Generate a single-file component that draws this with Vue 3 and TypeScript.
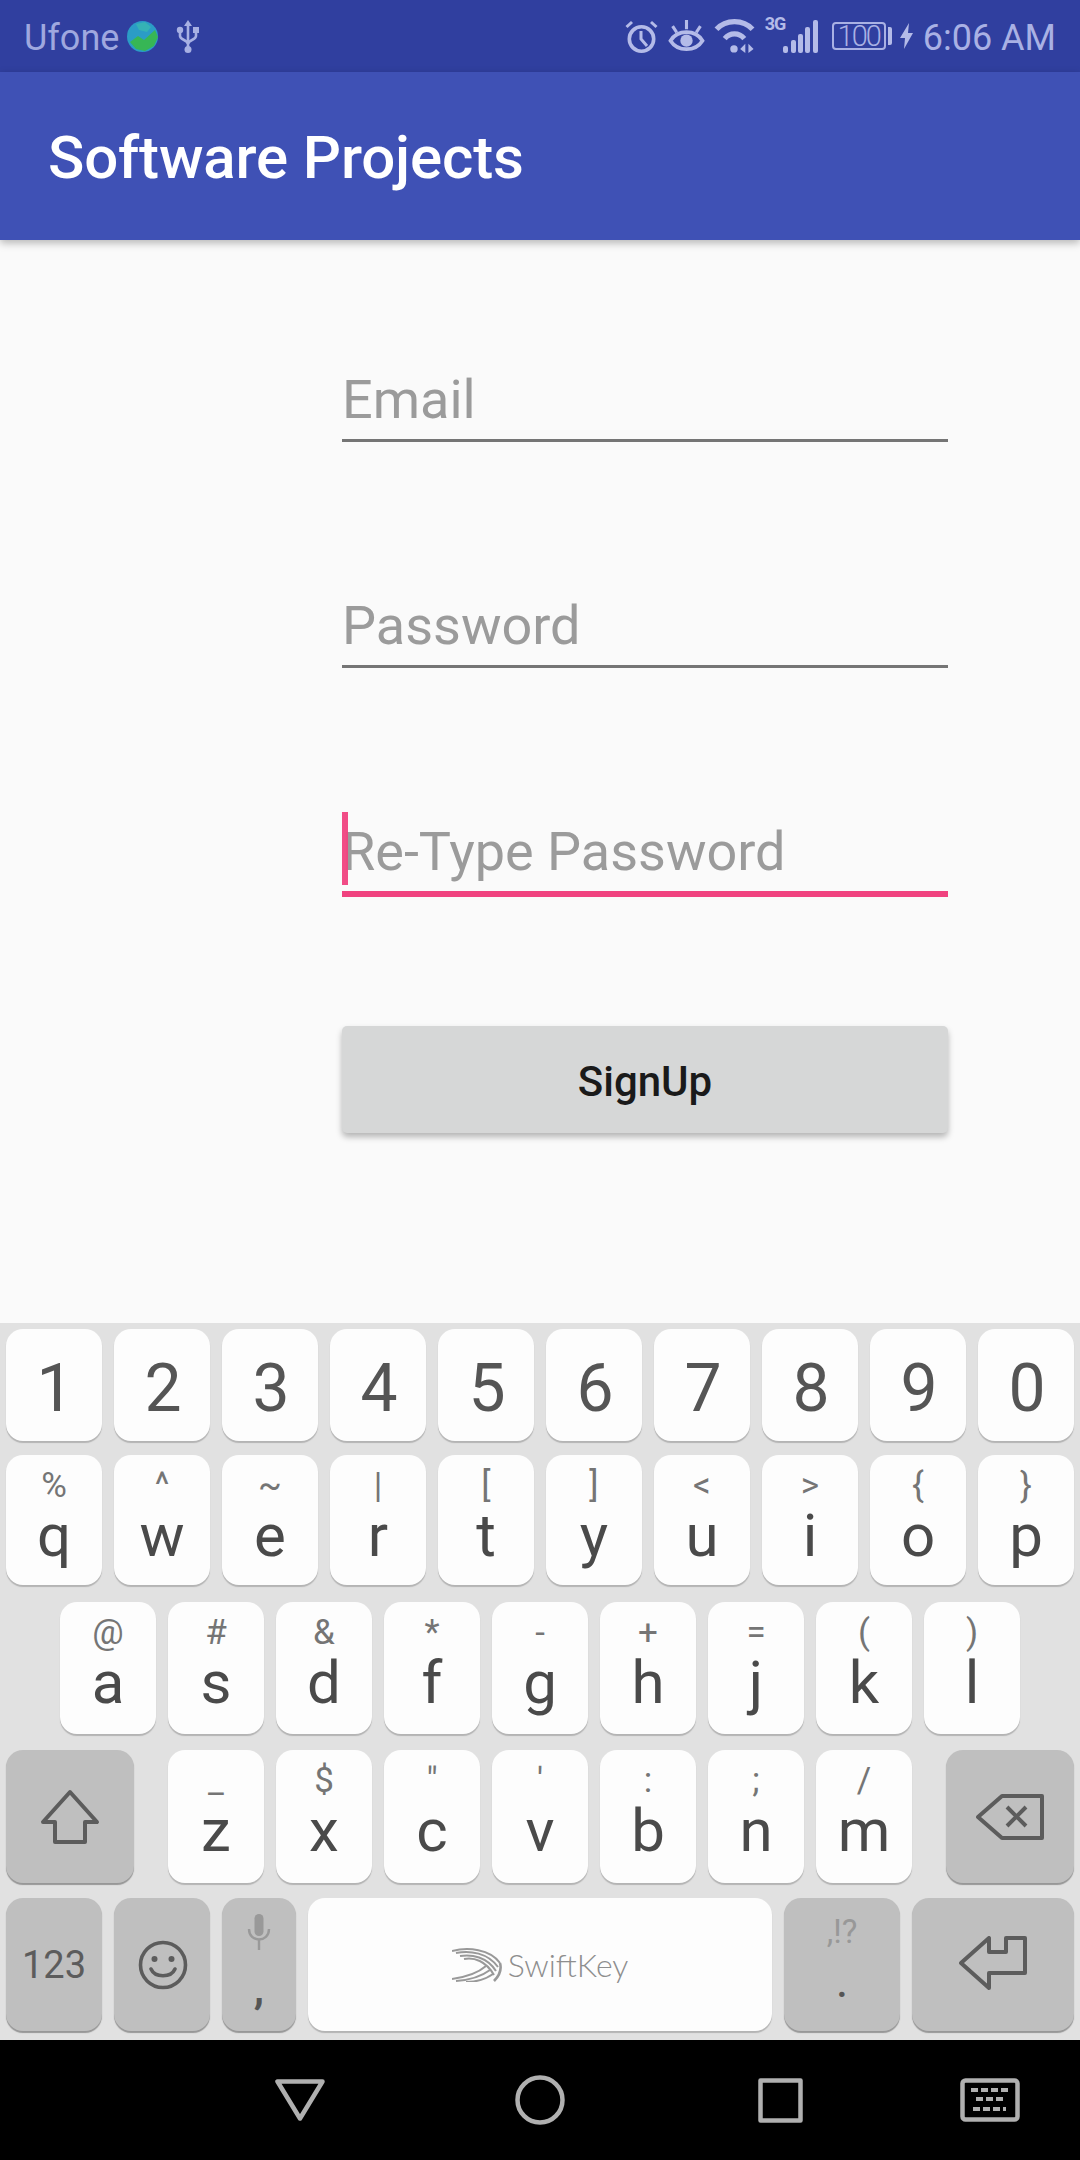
<template>
  <div class="phone">
    <div class="status-bar">
      <span class="carrier">Ufone</span>
      <svg class="ic-globe" width="31" height="31" viewBox="0 0 31 31">
        <circle cx="15.5" cy="15.5" r="15.5" fill="#2b9cc6" />
        <path d="M3 21 L11 15 L17 19 L28 9 L31 16 L27 25 L18 30 L9 28 Z" fill="#37b655" />
        <path d="M9 3 L18 1 L24 6 L20 11 L12 9 Z" fill="#35b2b5" />
      </svg>
      <svg class="ic-usb" width="24" height="34" viewBox="0 0 24 34" fill="none" stroke="#a7b0e3" stroke-width="2.6">
        <path d="M12 4 V30" />
        <path d="M12 1 L16 7 H8 Z" fill="#a7b0e3" stroke="none" />
        <path d="M4 13 V17 C4 21 12 21 12 25" />
        <path d="M20 13 V17 C20 21 12 21 12 25" />
        <circle cx="4" cy="11" r="3.2" fill="#a7b0e3" stroke="none" />
        <rect x="17" y="8" width="6" height="6" fill="#a7b0e3" stroke="none" />
        <circle cx="12" cy="30.5" r="3.5" fill="#a7b0e3" stroke="none" />
      </svg>

      <div class="status-right">
        <svg class="ic-alarm" width="33" height="33" viewBox="0 0 33 33" fill="none" stroke="#b4bbe8" stroke-width="3.6">
          <circle cx="16.5" cy="19" r="12.2" />
          <path d="M16 11 V19 L22 26" stroke-width="3" />
          <path d="M1.5 7 L7 2" stroke-width="3" />
          <path d="M31.5 7 L26 2" stroke-width="3" />
        </svg>
        <svg class="ic-eye" width="37" height="32" viewBox="0 0 35 31" fill="none" stroke="#b4bbe8" stroke-width="3.6">
          <path d="M2 20 C9 9 26 9 33 20 C26 31 9 31 2 20 Z" />
          <circle cx="17.5" cy="20" r="6" fill="#b4bbe8" stroke="none" />
          <path d="M17.5 0 V9 M4 6 L8 12 M31 6 L27 12" stroke-width="3" />
        </svg>
        <svg class="ic-wifi" width="41" height="34" viewBox="0 0 39 33" fill="none" stroke="#b4bbe8" stroke-width="5">
          <path d="M2 10 C11 0 28 0 37 10" />
          <path d="M10 19 C15 13 24 13 29 19" />
          <circle cx="19" cy="29" r="3.6" fill="#b4bbe8" stroke="none" />
          <path d="M25 29 L30 24 V33 Z M33 24 L38 29 L33 33 Z" fill="#b4bbe8" stroke="none" />
        </svg>
        <span class="net-type">3G</span>
        <svg class="ic-signal" width="35" height="33" viewBox="0 0 35 33" fill="#b4bbe8">
          <rect x="0" y="26" width="5" height="7" rx="2" />
          <rect x="8" y="20" width="5" height="13" rx="2" />
          <rect x="15" y="14" width="5" height="19" rx="2" />
          <rect x="22" y="7" width="5" height="26" rx="2" />
          <rect x="30" y="0" width="5" height="33" rx="2" />
        </svg>
        <div class="battery">100</div>
        <div class="battery-nub"></div>
        <svg class="ic-bolt" width="13" height="26" viewBox="0 0 13 26" fill="#b4bbe8">
          <path d="M9 0 L0 15 H5 L4 26 L13 10 H8 Z" />
        </svg>
        <span class="clock">6:06 AM</span>
      </div>
    </div>

    <header class="app-bar">Software Projects</header>

    <main class="content">
      <form class="form" @submit.prevent>
        <div class="field">Email</div>
        <div class="field">Password</div>
        <div class="field field--active">
          <span class="caret"></span>
          Re-Type Password
        </div>
        <button class="signup" type="button">SignUp</button>
      </form>
    </main>

    <section class="keyboard">
      <div class="row row-num">
        <div v-for="d in digits" :key="d" class="key key-digit">{{ d }}</div>
      </div>

      <div class="row row-q">
        <div v-for="k in rowQ" :key="k.main" class="key">
          <span class="hint">{{ k.hint }}</span>
          <span class="main-char">{{ k.main }}</span>
        </div>
      </div>

      <div class="row row-a">
        <div v-for="k in rowA" :key="k.main" class="key">
          <span class="hint">{{ k.hint }}</span>
          <span class="main-char">{{ k.main }}</span>
        </div>
      </div>

      <div class="row row-z">
        <div class="key key-fn key-shift">
          <svg width="60" height="56" viewBox="0 0 60 56" fill="none" stroke="#5c5c5c" stroke-width="4" stroke-linejoin="round">
            <path d="M30 3 L57 33 H45 V53 H15 V33 H3 Z" />
          </svg>
        </div>
        <div v-for="k in rowZ" :key="k.main" class="key">
          <span class="hint">{{ k.hint }}</span>
          <span class="main-char">{{ k.main }}</span>
        </div>
        <div class="key key-fn key-back">
          <svg width="68" height="46" viewBox="0 0 68 46" fill="none" stroke="#5c5c5c" stroke-width="4" stroke-linejoin="round">
            <path d="M2 23 L26 2 H66 V44 H26 Z" />
            <path d="M31 13 L50 32 M50 13 L31 32" />
          </svg>
        </div>
      </div>

      <div class="row row-bottom">
        <div class="key key-fn key-123">123</div>
        <div class="key key-fn key-emoji">
          <svg width="50" height="50" viewBox="0 0 50 50" fill="none" stroke="#5c5c5c" stroke-width="3.6">
            <circle cx="25" cy="25" r="22.5" />
            <circle cx="16.5" cy="19" r="3" fill="#5c5c5c" stroke="none" />
            <circle cx="33.5" cy="19" r="3" fill="#5c5c5c" stroke="none" />
            <path d="M13 29 C17 38 33 38 37 29" stroke-linecap="round" />
          </svg>
        </div>
        <div class="key key-fn key-mic">
          <svg width="24" height="36" viewBox="0 0 24 36" fill="none" stroke="#999" stroke-width="2.4">
            <rect x="7.5" y="0" width="9" height="22" rx="4.5" fill="#999" stroke="none" />
            <path d="M2 15 C2 29 22 29 22 15" />
            <path d="M12 25 V36" />
          </svg>
          <span class="mic-comma">,</span>
        </div>
        <div class="key key-space">
          <svg class="swift-logo" width="50" height="34" viewBox="0 0 50 34" fill="none" stroke="#999" stroke-width="2">
            <path d="M0 3 C16 -1 38 1 48 15" />
            <path d="M4 5 C18 2 36 5 46 19" />
            <path d="M8 8 C20 6 35 9 44 23" />
            <path d="M12 11 C22 9 34 13 42 27" />
            <path d="M48 15 C50 22 47 28 42 33" stroke-width="2.6" />
            <path d="M0 31 C14 29 26 25 34 18" />
            <path d="M4 33 C18 32 30 28 38 22" />
            <path d="M14 34 C24 34 34 31 41 26" />
          </svg>
          <span class="swift-text">SwiftKey</span>
        </div>
        <div class="key key-fn key-period">
          <span class="punct">,!?</span>
          <span class="period-dot">.</span>
        </div>
        <div class="key key-fn key-enter">
          <svg width="68" height="54" viewBox="0 0 68 54" fill="none" stroke="#5c5c5c" stroke-width="4" stroke-linejoin="round">
            <path d="M2 27 L30 2 V16 H47 V2 H66 V37 H30 V52 Z" />
          </svg>
        </div>
      </div>
    </section>

    <nav class="nav-bar">
      <svg width="50" height="42" viewBox="0 0 50 42" fill="none" stroke="#b0b0b0" stroke-width="4.5" stroke-linejoin="round">
        <path d="M2.5 2.5 H47.5 L25 39.5 Z" />
      </svg>
      <svg width="50" height="50" viewBox="0 0 50 50" fill="none" stroke="#b0b0b0" stroke-width="4.5">
        <circle cx="25" cy="25" r="22.5" />
      </svg>
      <svg width="45" height="45" viewBox="0 0 45 45" fill="none" stroke="#b0b0b0" stroke-width="4.5" stroke-linejoin="round">
        <rect x="2.5" y="2.5" width="40" height="40" />
      </svg>
      <svg width="60" height="44" viewBox="0 0 60 44" fill="none" stroke="#b0b0b0" stroke-width="4.5">
        <rect x="2.5" y="2.5" width="55" height="39" rx="3" />
        <path d="M11 12 H49 M16 21 H44 M13 31 H46" stroke-width="4" stroke-dasharray="7 3" />
      </svg>
    </nav>
  </div>
</template>

<script setup lang="ts">
interface KeyDef {
  main: string;
  hint: string;
}

const digits = ['1', '2', '3', '4', '5', '6', '7', '8', '9', '0'];

const toKeys = (mains: string, hints: string[]): KeyDef[] =>
  mains.split('').map((main, i) => ({ main, hint: hints[i] }));

const rowQ = toKeys('qwertyuiop', ['%', '^', '~', '|', '[', ']', '<', '>', '{', '}']);
const rowA = toKeys('asdfghjkl', ['@', '#', '&', '*', '-', '+', '=', '(', ')']);
const rowZ = toKeys('zxcvbnm', ['_', '$', '"', "'", ':', ';', '/']);
</script>

<style>
html,
body {
  margin: 0;
  background: #000;
}
</style>

<style scoped>
.phone {
  width: 1080px;
  height: 2160px;
  display: flex;
  flex-direction: column;
  font-family: Roboto, "Liberation Sans", sans-serif;
  background: #fafafa;
  overflow: hidden;
}

/* status bar */
.status-bar {
  flex: 0 0 72px;
  display: flex;
  align-items: center;
  padding: 0 24px 0 24px;
  background: #303f9f;
  color: #a9b1e4;
  font-size: 36px;
}

.carrier {
  padding-top: 3px;
  color: #9fa8df;
}

.ic-globe {
  margin-left: 8px;
}

.ic-usb {
  margin-left: 18px;
}

.status-right {
  margin-left: auto;
  display: flex;
  align-items: center;
}

.ic-eye {
  margin-left: 10px;
}

.ic-wifi {
  margin-left: 9px;
}

.net-type {
  margin-left: 10px;
  align-self: flex-start;
  width: 18px;
  font-size: 18px;
  line-height: 20px;
  font-weight: 700;
  letter-spacing: -1px;
  color: #b4bbe8;
}

.battery {
  margin-left: 14px;
  width: 54px;
  height: 28px;
  box-sizing: border-box;
  border: 2px solid #a9b1e4;
  border-radius: 4px;
  font-size: 29px;
  font-weight: 300;
  line-height: 25px;
  letter-spacing: -2px;
  text-align: center;
}

.battery-nub {
  width: 4px;
  height: 18px;
  margin-left: 2px;
  border-radius: 0 2px 2px 0;
  background: #b4bbe8;
}

.ic-bolt {
  margin-left: 8px;
}

.clock {
  margin-left: 10px;
  padding-top: 3px;
}

/* app bar */
.app-bar {
  flex: 0 0 168px;
  position: relative;
  z-index: 1;
  box-sizing: border-box;
  padding: 4px 0 0 48px;
  background: #3f51b5;
  color: #fff;
  font-size: 60px;
  font-weight: 500;
  letter-spacing: -0.15px;
  line-height: 164px;
  box-shadow: 0 3px 8px rgba(0, 0, 0, 0.28);
}

/* form */
.content {
  flex: 1;
  padding: 130px 132px 0 342px;
}

.form {
  display: flex;
  flex-direction: column;
}

.field {
  position: relative;
  height: 60px;
  margin-bottom: 154px;
  padding-bottom: 9px;
  border-bottom: 3px solid #757575;
  color: #9b9b9b;
  font-size: 54px;
  line-height: 60px;
}

.field--active {
  margin-bottom: 129px;
  border-bottom: 6px solid #f0427f;
}

.caret {
  position: absolute;
  left: 0;
  top: -10px;
  width: 6px;
  height: 73px;
  background: #f0427f;
  opacity: 0.95;
}

.signup {
  height: 107px;
  padding: 4px 0 0;
  border: 0;
  border-radius: 5px;
  background: #d6d7d7;
  color: #1a1a1a;
  font-family: inherit;
  font-size: 42px;
  font-weight: 500;
  box-shadow: 0 4px 6px rgba(0, 0, 0, 0.28);
}

/* keyboard */
.keyboard {
  flex: 0 0 717px;
  box-sizing: border-box;
  padding: 6px 6px 9px;
  background: #e1e1e1;
}

.row {
  display: flex;
  gap: 12px;
}

.row-num {
  height: 112px;
}

.row-q {
  height: 130px;
  margin-top: 14px;
}

.row-a {
  height: 132px;
  margin-top: 17px;
  padding: 0 54px;
}

.row-z {
  height: 133px;
  margin-top: 16px;
}

.row-bottom {
  height: 133px;
  margin-top: 15px;
}

.key {
  flex: 0 0 96px;
  display: flex;
  flex-direction: column;
  align-items: center;
  box-sizing: border-box;
  padding-top: 11px;
  border-radius: 17px;
  background: #fdfdfd;
  box-shadow: 0 2px 1px #b4b4b4;
}

.key-digit {
  padding: 27px 0 0 2px;
  color: #555;
  font-size: 66px;
  line-height: 66px;
}

.hint {
  height: 40px;
  color: #757575;
  font-size: 35px;
  line-height: 40px;
}

.main-char {
  color: #4a4a4a;
  font-size: 60px;
  line-height: 60px;
}

.key-fn {
  padding-top: 0;
  justify-content: center;
  background: #bfbfbf;
  box-shadow: 0 2px 1px #979797;
}

.key-shift {
  flex-basis: 128px;
  margin-right: 22px;
}

.key-back {
  flex-basis: 128px;
  margin-left: 22px;
}

.key-123 {
  padding-top: 0;
  color: #5c5c5c;
  font-size: 38px;
}

.key-emoji {
  padding-left: 2px;
}

.key-mic {
  flex-basis: 74px;
  justify-content: flex-start;
  padding-top: 16px;
}

.mic-comma {
  margin-top: 18px;
  color: #555;
  font-size: 42px;
  font-weight: 700;
  line-height: 42px;
}

.key-space {
  flex: 0 0 464px;
  flex-direction: row;
  justify-content: center;
  gap: 6px;
  padding-top: 0;
}

.swift-text {
  color: #8e8e8e;
  font-family: Lato, Roboto, sans-serif;
  font-size: 32px;
  font-weight: 300;
}

.key-period {
  flex-basis: 116px;
  justify-content: flex-start;
  padding-top: 16px;
}

.punct {
  color: #989898;
  font-size: 33px;
  line-height: 36px;
}

.period-dot {
  margin-top: 7px;
  color: #555;
  font-size: 48px;
  line-height: 48px;
}

.key-enter {
  flex-basis: 162px;
  padding-bottom: 4px;
}

/* nav bar */
.nav-bar {
  flex: 0 0 120px;
  display: grid;
  grid-template-columns: 240px 240px 240px 180px;
  justify-items: center;
  align-items: center;
  padding-left: 180px;
  background: #000;
}
</style>
